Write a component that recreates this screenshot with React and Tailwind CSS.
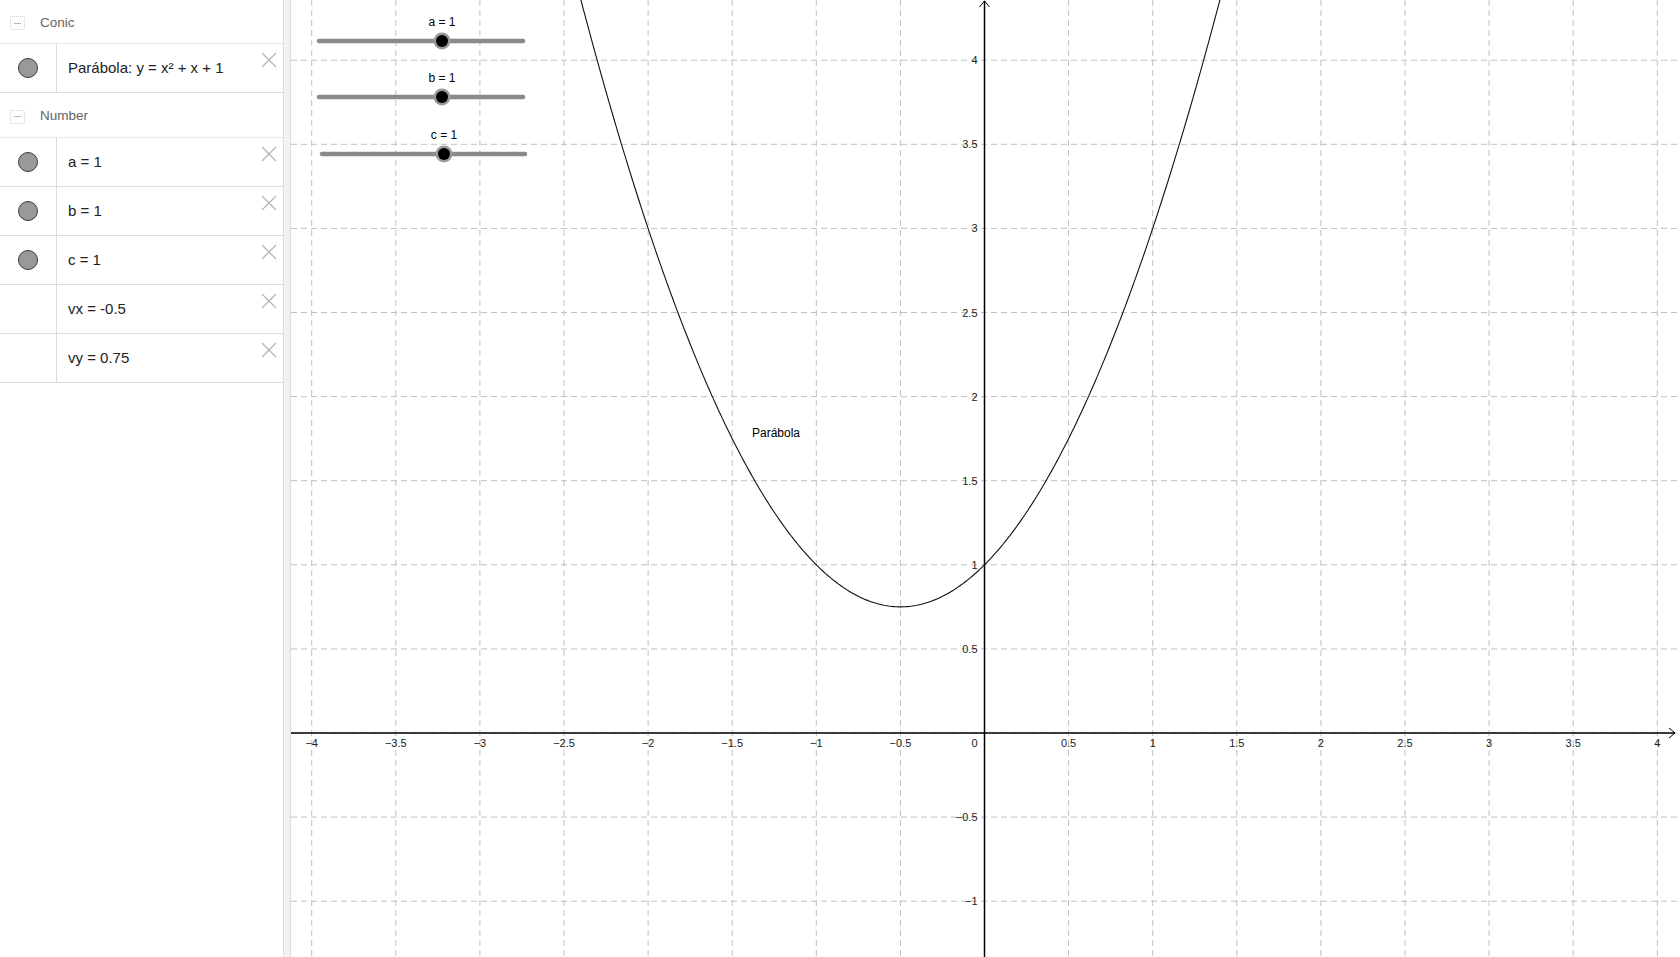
import React from "react";

const OX = 693.5; // origin inside the graphics view
const OY = 733;
const S = 168.2; // px per unit
const W = 1389;
const H = 957;

const px = (x) => OX + x * S;
const py = (y) => OY - y * S;

const fmt = (v) => {
  const s = String(Math.abs(v));
  return v < 0 ? "\u2212" + s : s;
};

function CloseIcon() {
  return (
    <svg width="16" height="16" viewBox="0 0 16 16" className="shrink-0">
      <path d="M1 1L15 15M15 1L1 15" stroke="#b4b4b4" strokeWidth="1.3" fill="none" />
    </svg>
  );
}

function GroupHeader({ label, h = "h-[44px]" }) {
  return (
    <div className={`flex ${h} items-center border-b border-dotted border-[#d4d4d4] pt-[3px]`}>
      <div className="ml-[10px] flex h-[14px] w-[15px] items-center justify-center rounded-[2px] border border-dotted border-[#cfcfcf]">
        <div className="h-px w-[7px] bg-[#b8b8b8]" />
      </div>
      <span className="ml-[15px] text-[13.5px] text-[#666]" style={{ fontFamily: '"Liberation Sans", Arial, sans-serif' }}>
        {label}
      </span>
    </div>
  );
}

function Row({ text, dot = true, h = "h-[49px]" }) {
  return (
    <div className={`flex ${h} border-b border-[#dcdcdc]`}>
      <div className="flex w-[57px] shrink-0 items-center justify-center border-r border-[#dcdcdc]">
        {dot && <div className="h-[20px] w-[20px] rounded-full border border-[#3a3a3a] bg-[#999]" />}
      </div>
      <div className="flex flex-1 items-center pl-[11px] text-[15px] text-[#222]" style={{ fontFamily: '"Liberation Sans", Arial, sans-serif' }}>
        {text}
      </div>
      <div className="pr-[6px] pt-[8px]">
        <CloseIcon />
      </div>
    </div>
  );
}

function Slider({ x1, x2, y, knob, label }) {
  return (
    <g>
      <text x={knob} y={y - 15} textAnchor="middle" fontSize="12" fill="#000">
        {label}
      </text>
      <line x1={x1} y1={y} x2={x2} y2={y} stroke="#8a8a8a" strokeWidth="4.5" strokeLinecap="round" />
      <circle cx={knob} cy={y} r="8.5" fill="#9a9a9a" />
      <circle cx={knob} cy={y} r="6" fill="#000" />
    </g>
  );
}

function Graph() {
  const xs = [];
  for (let i = -8; i <= 8; i++) xs.push(i / 2);
  const ys = [];
  for (let i = -2; i <= 8; i++) ys.push(i / 2);

  const pts = [];
  for (let x = -2.6; x <= 1.6; x += 0.01) {
    const y = x * x + x + 1;
    pts.push(`${px(x).toFixed(2)},${py(y).toFixed(2)}`);
  }

  return (
    <svg width={W} height={H} viewBox={`0 0 ${W} ${H}`} className="block" style={{ fontFamily: '"Liberation Sans", Arial, sans-serif' }}>
      {xs.map((x) => (
        <line key={"gx" + x} x1={px(x)} y1={0} x2={px(x)} y2={H} stroke="#c0c0c0" strokeWidth="1" strokeDasharray="6 4" />
      ))}
      {ys.map((y) => (
        <line key={"gy" + y} x1={0} y1={py(y)} x2={W} y2={py(y)} stroke="#c0c0c0" strokeWidth="1" strokeDasharray="6 4" />
      ))}

      {/* axes */}
      <line x1={0} y1={OY} x2={W - 5} y2={OY} stroke="#000" strokeWidth="1.5" />
      <path d={`M${W - 11} ${OY - 5}L${W - 5} ${OY}L${W - 11} ${OY + 5}`} stroke="#000" strokeWidth="1" fill="none" />
      <line x1={OX} y1={1} x2={OX} y2={H} stroke="#000" strokeWidth="1.5" />
      <path d={`M${OX - 5} 7L${OX} 1L${OX + 5} 7`} stroke="#000" strokeWidth="1" fill="none" />

      {xs
        .filter((x) => x !== 0)
        .map((x) => (
          <text key={"lx" + x} x={px(x)} y={OY + 14} textAnchor="middle" fontSize="11" fill="#222">
            {fmt(x)}
          </text>
        ))}
      <text x={OX - 7} y={OY + 14} textAnchor="end" fontSize="11" fill="#222">
        0
      </text>
      {ys
        .filter((y) => y !== 0)
        .map((y) => (
          <text key={"ly" + y} x={OX - 7} y={py(y) + 4} textAnchor="end" fontSize="11" fill="#222">
            {fmt(y)}
          </text>
        ))}

      {/* parabola */}
      <polyline points={pts.join(" ")} fill="none" stroke="#111" strokeWidth="1.1" />
      <text x={461} y={437} fontSize="12" fill="#000">
        Parábola
      </text>

      <Slider x1={28} x2={232} y={41} knob={151} label="a = 1" />
      <Slider x1={28} x2={232} y={97} knob={151} label="b = 1" />
      <Slider x1={31} x2={234} y={154} knob={153} label="c = 1" />
    </svg>
  );
}

export default function App() {
  return (
    <div className="flex h-[957px] w-[1680px] overflow-hidden bg-white">
      <div className="w-[283px] shrink-0 bg-white">
        <GroupHeader label="Conic" />
        <Row h="h-[49px]" text={<span>Parábola: y = x² + x + 1</span>} />
        <GroupHeader label="Number" h="h-[45px]" />
        <Row text="a = 1" />
        <Row text="b = 1" />
        <Row text="c = 1" />
        <Row text="vx = -0.5" dot={false} />
        <Row text="vy = 0.75" dot={false} />
      </div>
      <div className="w-[8px] shrink-0 border-x border-[#dedede] bg-[#f2f2f2]" />
      <div className="flex-1 overflow-hidden">
        <Graph />
      </div>
    </div>
  );
}
